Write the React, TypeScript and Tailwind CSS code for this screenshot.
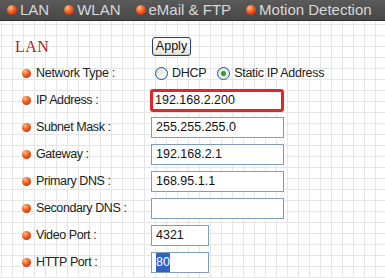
const tabs = ['LAN', 'WLAN', 'eMail & FTP', 'Motion Detection'];

const rows = [
  { label: 'IP Address :', value: '192.168.2.200', wide: true, hot: true },
  { label: 'Subnet Mask :', value: '255.255.255.0', wide: true },
  { label: 'Gateway :', value: '192.168.2.1', wide: true },
  { label: 'Primary DNS :', value: '168.95.1.1', wide: true },
  { label: 'Secondary DNS :', value: '', wide: true },
  { label: 'Video Port :', value: '4321', wide: false },
  { label: 'HTTP Port :', value: '80', wide: false, selected: true },
];

function Ball({ size = 'w-[9px] h-[9px]' }: { size?: string }) {
  return (
    <span
      className={`${size} inline-block rounded-full shrink-0 bg-[radial-gradient(circle_at_35%_30%,#ffc080_0%,#f05a1c_45%,#b81a08_100%)]`}
    />
  );
}

function Radio({ checked }: { checked?: boolean }) {
  return (
    <span className="w-[13px] h-[13px] rounded-full border border-[#1c5180] bg-[linear-gradient(135deg,#dcdcd7,#ffffff)] flex items-center justify-center shrink-0">
      {checked && <span className="w-[5px] h-[5px] rounded-full bg-[#21a121]" />}
    </span>
  );
}

export default function App() {
  return (
    <div className="w-[385px] h-[278px] overflow-hidden font-['Liberation_Sans',Arial,sans-serif] bg-white bg-[linear-gradient(to_right,#e6e6e6_1px,transparent_1px),linear-gradient(to_bottom,#e6e6e6_1px,transparent_1px)] bg-[size:11px_11px] bg-[position:1px_2px]">
      <div className="h-[21px] bg-[linear-gradient(to_bottom,#5a5a5a,#474747)] border-b border-[#2e2e2e] flex items-center pl-[7px] gap-[15px] text-[15px] text-[#d8d8d8] whitespace-nowrap">
        {tabs.map((t) => (
          <div key={t} className="flex items-center gap-[3px]">
            <Ball size="w-[10px] h-[10px]" />
            <span>{t}</span>
          </div>
        ))}
      </div>

      <div className="pt-[12px]">
        <div className="h-[27px] flex items-center">
          <div className="w-[152px] pl-[15px] font-['Liberation_Serif',serif] text-[16px] text-[#b8202a] tracking-[0.5px]">
            LAN
          </div>
          <button className="h-[19px] w-[39px] text-[12.5px] text-[#111] rounded-[3px] border border-[#1e3f7a] bg-[linear-gradient(to_bottom,#ffffff,#e6e6de)] shadow-[inset_0_-1px_0_#c8c8c0] leading-none">
            Apply
          </button>
        </div>

        <div className="h-[27px] flex items-center text-[12.5px] text-[#222] tracking-[-0.3px]">
          <div className="w-[151px] flex items-center pl-[22px] gap-[5px]">
            <Ball />
            <span>Network Type :</span>
          </div>
          <div className="flex items-center gap-[4px] pl-[4px]">
            <Radio />
            <span className="mr-[7px]">DHCP</span>
            <Radio checked />
            <span>Static IP Address</span>
          </div>
        </div>

        {rows.map((r) => (
          <div key={r.label} className="h-[27px] flex items-center text-[12.5px] text-[#222]">
            <div className="w-[151px] flex items-center pl-[22px] gap-[5px] tracking-[-0.4px]">
              <Ball />
              <span>{r.label}</span>
            </div>
            {r.hot ? (
              <div className="w-[134px] h-[23px] -ml-[1px] rounded-[3px] border-[3px] border-[#e0262a] bg-white flex items-center pl-[2px] text-[12.5px] text-[#111]">
                {r.value}
              </div>
            ) : (
              <div
                className={`${r.wide ? 'w-[133px]' : 'w-[58px]'} h-[21px] border border-[#7f9db9] bg-white flex items-center pl-[4px] text-[12.5px] text-[#111]`}
              >
                {r.selected ? <span className="bg-[#3163c5] text-white">{r.value}</span> : r.value}
              </div>
            )}
          </div>
        ))}
      </div>
    </div>
  );
}
